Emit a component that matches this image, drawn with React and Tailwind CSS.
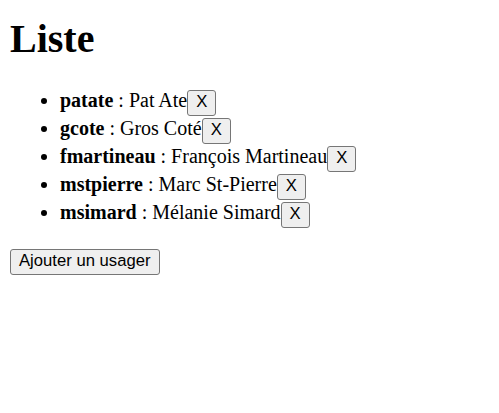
const usagers = [
  { id: 'patate', nom: 'Pat Ate' },
  { id: 'gcote', nom: 'Gros Coté' },
  { id: 'fmartineau', nom: 'François Martineau' },
  { id: 'mstpierre', nom: 'Marc St-Pierre' },
  { id: 'msimard', nom: 'Mélanie Simard' },
]

function Bouton({ children }) {
  return (
    <button className="inline-block box-border h-[26px] bg-[#efefef] border border-[#767676] rounded-[3px] px-[8px] pt-0 pb-[2px] text-[16.67px] leading-[22px] text-black font-['Liberation_Sans',Arial,sans-serif] align-baseline">
      {children}
    </button>
  )
}

export default function App() {
  return (
    <div className="p-[10px] pt-[16px] bg-white text-black font-['Liberation_Serif','Times_New_Roman',serif] text-[20px] leading-[23px] min-h-[413px]">
      <h1 className="text-[40px] font-bold leading-[46px]">Liste</h1>
      <ul className="list-disc pl-[50px] mt-[26px] mb-[20px]">
        {usagers.map(u => (
          <li key={u.id} className="leading-[24.5px]">
            <b>{u.id}</b> : {u.nom}<Bouton>X</Bouton>
          </li>
        ))}
      </ul>
      <Bouton>Ajouter un usager</Bouton>
    </div>
  )
}
